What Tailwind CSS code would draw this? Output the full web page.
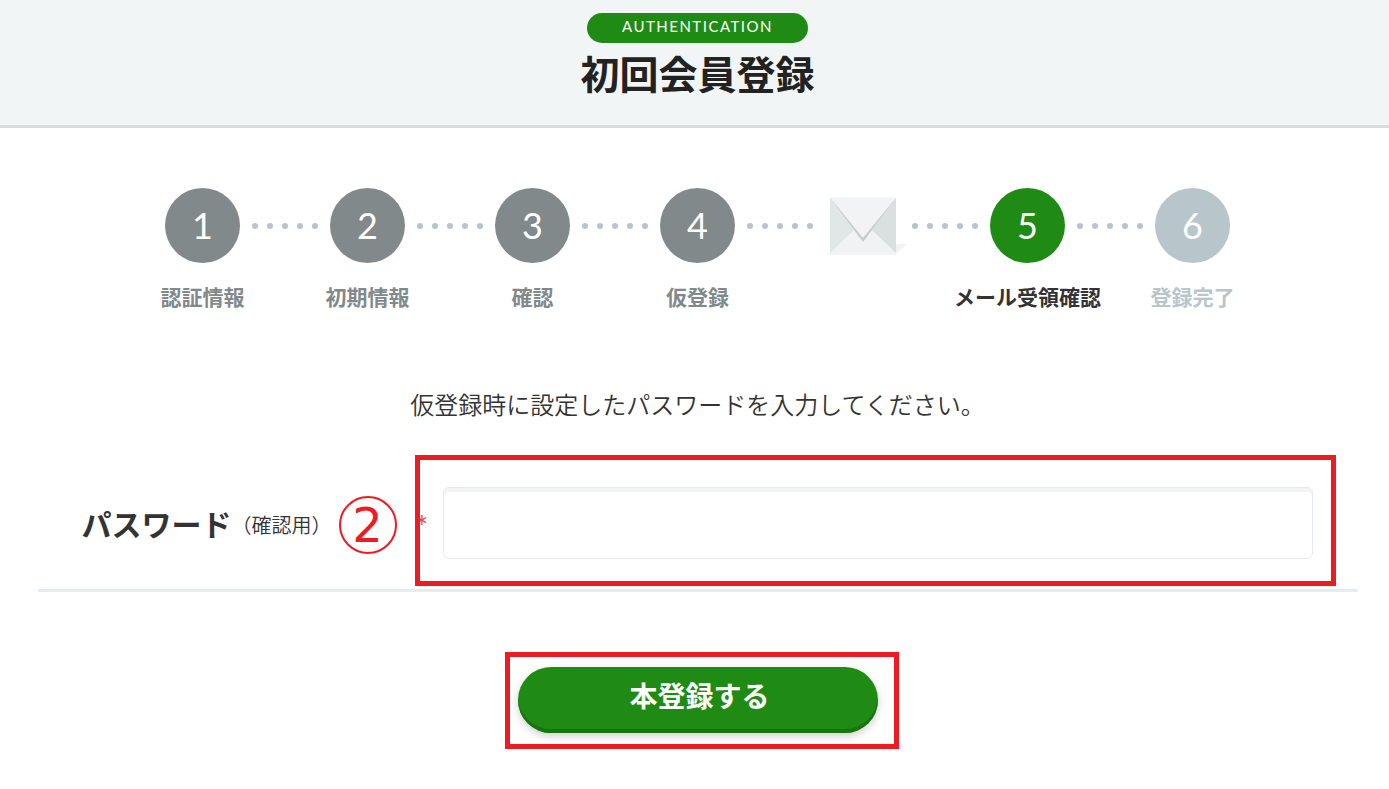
<!DOCTYPE html>
<html lang="ja">
<head>
<meta charset="utf-8"/>
<meta content="width=device-width, initial-scale=1" name="viewport"/>
<title>初回会員登録</title>
<script src="https://cdn.jsdelivr.net/npm/@tailwindcss/browser@4"></script>
<style>
  body { font-family: Lato, 'Noto Sans CJK JP', sans-serif; }
</style>
</head>
<body class="bg-white text-[#333333] min-h-screen">
  <!-- Header -->
  <header class="bg-[#f1f5f6] border-b-3 border-[#d9dde1] pl-1.5 pt-[13px] pb-6 flex flex-col items-center">
    <p class="w-[221px] h-[30px] rounded-full bg-[#1f8b14] text-white text-[15px] leading-[26px] tracking-widest text-center">AUTHENTICATION</p>
    <h1 class="mt-1 text-[39px] leading-[54px] font-bold text-[#222222]">初回会員登録</h1>
  </header>

  <main class="pl-1.5 pb-10">
    <!-- Steps -->
    <ol class="pt-15 flex justify-center items-start gap-3 text-[21px] leading-7 font-bold text-[#82898b]">
      <li class="w-[75px] flex flex-col items-center gap-5">
        <span class="size-[75px] pb-0.5 shrink-0 rounded-full bg-[#82898b] text-white text-4xl font-normal flex items-center justify-center">1</span>
        <span class="whitespace-nowrap">認証情報</span>
      </li>
      <li aria-hidden="true" class="mt-[35px] flex gap-[9px]"><i class="size-1.5 rounded-full bg-[#b4c5d0]"></i><i class="size-1.5 rounded-full bg-[#b4c5d0]"></i><i class="size-1.5 rounded-full bg-[#b4c5d0]"></i><i class="size-1.5 rounded-full bg-[#b4c5d0]"></i><i class="size-1.5 rounded-full bg-[#b4c5d0]"></i></li>
      <li class="w-[75px] flex flex-col items-center gap-5">
        <span class="size-[75px] pb-0.5 shrink-0 rounded-full bg-[#82898b] text-white text-4xl font-normal flex items-center justify-center">2</span>
        <span class="whitespace-nowrap">初期情報</span>
      </li>
      <li aria-hidden="true" class="mt-[35px] flex gap-[9px]"><i class="size-1.5 rounded-full bg-[#b4c5d0]"></i><i class="size-1.5 rounded-full bg-[#b4c5d0]"></i><i class="size-1.5 rounded-full bg-[#b4c5d0]"></i><i class="size-1.5 rounded-full bg-[#b4c5d0]"></i><i class="size-1.5 rounded-full bg-[#b4c5d0]"></i></li>
      <li class="w-[75px] flex flex-col items-center gap-5">
        <span class="size-[75px] pb-0.5 shrink-0 rounded-full bg-[#82898b] text-white text-4xl font-normal flex items-center justify-center">3</span>
        <span class="whitespace-nowrap">確認</span>
      </li>
      <li aria-hidden="true" class="mt-[35px] flex gap-[9px]"><i class="size-1.5 rounded-full bg-[#b4c5d0]"></i><i class="size-1.5 rounded-full bg-[#b4c5d0]"></i><i class="size-1.5 rounded-full bg-[#b4c5d0]"></i><i class="size-1.5 rounded-full bg-[#b4c5d0]"></i><i class="size-1.5 rounded-full bg-[#b4c5d0]"></i></li>
      <li class="w-[75px] flex flex-col items-center gap-5">
        <span class="size-[75px] pb-0.5 shrink-0 rounded-full bg-[#82898b] text-white text-4xl font-normal flex items-center justify-center">4</span>
        <span class="whitespace-nowrap">仮登録</span>
      </li>
      <li aria-hidden="true" class="mt-[35px] flex gap-[9px]"><i class="size-1.5 rounded-full bg-[#b4c5d0]"></i><i class="size-1.5 rounded-full bg-[#b4c5d0]"></i><i class="size-1.5 rounded-full bg-[#b4c5d0]"></i><i class="size-1.5 rounded-full bg-[#b4c5d0]"></i><i class="size-1.5 rounded-full bg-[#b4c5d0]"></i></li>
      <li class="w-[75px]">
        <!-- Mail -->
        <svg class="w-[84px] h-[75px] max-w-none" viewBox="0 0 84 75" fill="none">
          <path d="M71 56h11L71 66z" fill="#f1f2f3"/>
          <path d="M2 67l3-3h66v3z" fill="#f3f4f4"/>
          <path d="M5 9.500h66V65H5z" fill="#f1f2f4"/>
          <path d="M5 10v55l24-23z" fill="#e1e7e7"/>
          <path d="M71 10v55L47 42z" fill="#dae0e0"/>
          <path d="M5 10l33 44 33-44-33 36z" fill="#c9cccd"/>
          <path d="M5 9.500h66L38 50z" fill="#f2f3f5"/>
        </svg>
      </li>
      <li aria-hidden="true" class="mt-[35px] flex gap-[9px]"><i class="size-1.5 rounded-full bg-[#b4c5d0]"></i><i class="size-1.5 rounded-full bg-[#b4c5d0]"></i><i class="size-1.5 rounded-full bg-[#b4c5d0]"></i><i class="size-1.5 rounded-full bg-[#b4c5d0]"></i><i class="size-1.5 rounded-full bg-[#b4c5d0]"></i></li>
      <li aria-current="step" class="w-[75px] flex flex-col items-center gap-5 text-[#333333]">
        <span class="size-[75px] pb-0.5 shrink-0 rounded-full bg-[#1f8b14] text-white text-4xl font-normal flex items-center justify-center">5</span>
        <span class="whitespace-nowrap">メール受領確認</span>
      </li>
      <li aria-hidden="true" class="mt-[35px] flex gap-[9px]"><i class="size-1.5 rounded-full bg-[#b4c5d0]"></i><i class="size-1.5 rounded-full bg-[#b4c5d0]"></i><i class="size-1.5 rounded-full bg-[#b4c5d0]"></i><i class="size-1.5 rounded-full bg-[#b4c5d0]"></i><i class="size-1.5 rounded-full bg-[#b4c5d0]"></i></li>
      <li class="w-[75px] flex flex-col items-center gap-5 text-[#b8c5cb]">
        <span class="size-[75px] pb-0.5 shrink-0 rounded-full bg-[#b8c5cb] text-white text-4xl font-normal flex items-center justify-center">6</span>
        <span class="whitespace-nowrap">登録完了</span>
      </li>
    </ol>

    <!-- Form -->
    <form class="max-w-[1320px] mx-auto flex flex-col items-center">
      <p class="mt-19 text-2xl leading-9 font-[350]">仮登録時に設定したパスワードを入力してください。</p>
      <div class="mt-8 w-full flex items-center pb-[3px] border-b-3 border-[#e6ebee]">
        <div class="w-[377px] shrink-0 pl-11 pt-2 flex items-center justify-between">
          <label for="password" class="flex items-center whitespace-nowrap"><span class="text-[30px] font-bold">パスワード</span><span class="text-xl font-[350]">（確認用）</span></label>
          <span class="size-[58px] mr-[18px] rounded-full border-2 border-[#ed1c24] text-[#ed1c24] text-5xl font-[DejaVu_Sans] flex items-center justify-center">2</span>
        </div>
        <div class="relative flex-1 mr-[22px] border-5 border-[#ed1c24] pl-[23px] pr-[18px] pt-[27px] pb-[22px]">
          <span class="absolute -left-1 top-12 -z-10 text-3xl text-[#d9534f]">*</span>
          <input id="password" type="password" required class="block w-full h-[72px] px-4 text-2xl rounded-md border border-[#e5eaee] shadow-[inset_0_4px_0_#f4f4f4] focus:outline-none"/>
        </div>
      </div>
      <div class="mt-15 ml-2 border-5 border-[#ed1c24] pt-2.5 pb-[11px] pl-2 pr-4">
        <button type="submit" class="block w-[360px] h-[66px] pb-2 pl-1 rounded-full bg-[#1f8b14] text-white text-[28px] font-bold shadow-[inset_0_-4px_0_#19730f,0_3px_8px_rgba(0,0,0,0.2)]">本登録する</button>
      </div>
    </form>
  </main>
</body>
</html>
